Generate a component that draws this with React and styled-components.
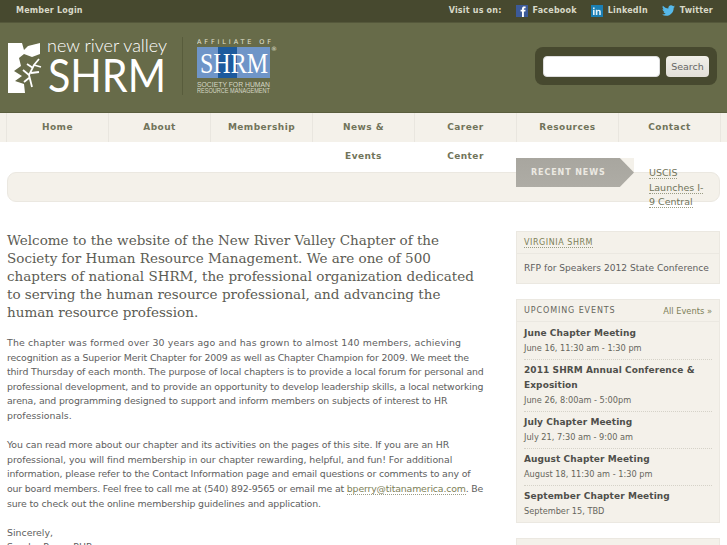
import React from 'react';
import styled, { createGlobalStyle } from 'styled-components';
import { FaTwitter } from 'react-icons/fa';

const GlobalStyle = createGlobalStyle`
  html, body {
    margin: 0;
    padding: 0;
    height: 545px;
    overflow: hidden;
    background: #fff;
    font-family: "DejaVu Sans", sans-serif;
  }
`;

const events = [
  { title: 'June Chapter Meeting', date: 'June 16, 11:30 am - 1:30 pm' },
  { title: '2011 SHRM Annual Conference & Exposition', date: 'June 26, 8:00am - 5:00pm' },
  { title: 'July Chapter Meeting', date: 'July 21, 7:30 am - 9:00 am' },
  { title: 'August Chapter Meeting', date: 'August 18, 11:30 am - 1:30 pm' },
  { title: 'September Chapter Meeting', date: 'September 15, TBD' }
];

const navItems = ['Home', 'About', 'Membership', 'News & Events', 'Career Center', 'Resources', 'Contact'];

const Logo = () => (
  <svg width="170" height="58" viewBox="0 0 170 58">
    <path
      fill="#fff"
      d="M0 6h14l2 7 4-4 12-3v11l-8 3-8-3-5 4 2 8-7 5 8 5-7 5 9 3 1 9H0z"
    />
    <path
      fill="none"
      stroke="#fff"
      strokeWidth="1.8"
      d="M24 50l-3-12 5-10 5-6M21 38l-6-5M21 41l-5 4M25 31l-6-4M26 28l7 2M23 36l8-1"
    />
    <text x="39" y="15" fontFamily="Lato, sans-serif" fontWeight="300" fontSize="17.5" fill="#fff" textLength="120" lengthAdjust="spacingAndGlyphs">new river valley</text>
    <text x="40" y="55" fontFamily="Lato, sans-serif" fontSize="47" fill="#fff" textLength="118" lengthAdjust="spacingAndGlyphs">SHRM</text>
  </svg>
);

const AffiliateLogo = () => (
  <svg width="82" height="58" viewBox="0 0 82 58">
    <text x="0" y="7" fontFamily="'DejaVu Sans', sans-serif" fontSize="6.5" fill="#e4e4d6" textLength="74">AFFILIATE OF</text>
    <rect x="0" y="10" width="73" height="31" fill="#6f95c8" />
    <rect x="21" y="10" width="19" height="31" fill="#1d5a9d" />
    <text x="3" y="36" fontFamily="'Liberation Serif', serif" fontSize="29" fill="#fff" textLength="68" lengthAdjust="spacingAndGlyphs">SHRM</text>
    <text x="74" y="14" fontFamily="'DejaVu Sans', sans-serif" fontSize="6" fill="#e4e4d6">®</text>
    <text x="0" y="50" fontFamily="'Liberation Sans', sans-serif" fontSize="7" fill="#d6d8c6" textLength="73" lengthAdjust="spacingAndGlyphs">SOCIETY FOR HUMAN</text>
    <text x="0" y="56" fontFamily="'Liberation Sans', sans-serif" fontSize="7" fill="#d6d8c6" textLength="73" lengthAdjust="spacingAndGlyphs">RESOURCE MANAGEMENT</text>
  </svg>
);

const FacebookIcon = () => (
  <svg width="12" height="12" viewBox="0 0 12 12">
    <rect width="12" height="12" fill="#3c5a99" />
    <path fill="#fff" d="M6 12V6.6H4.6V4.8H6V3.6C6 2 7 1.4 8.2 1.4H9.6v1.9H8.7c-.6 0-.8.3-.8.8v.7h1.7l-.3 1.8H7.9V12z" />
  </svg>
);

const LinkedinIcon = () => (
  <svg width="12" height="12" viewBox="0 0 12 12">
    <rect width="12" height="12" fill="#1b7fb3" />
    <path fill="#dff1fa" d="M2 4.8h1.6V10H2zM2 2.4h1.6V4H2zM4.8 4.8h1.5v.7c.4-.5.9-.8 1.6-.8 1.3 0 1.9.8 1.9 2.1V10H8.2V7.1c0-.7-.2-1.1-.8-1.1s-1 .4-1 1.1V10H4.8z" />
  </svg>
);

const App = () => {
  return (
    <Page>
      <GlobalStyle />
      <TopBar>
        <TopLink>Member Login</TopLink>
        <Social>
          <TopLink>Visit us on:</TopLink>
          <SocialLink><FacebookIcon />Facebook</SocialLink>
          <SocialLink><LinkedinIcon />LinkedIn</SocialLink>
          <SocialLink><FaTwitter size={13} color="#56b9ea" />Twitter</SocialLink>
        </Social>
      </TopBar>

      <Header>
        <Logos>
          <Logo />
          <Divider />
          <AffiliateLogo />
        </Logos>
        <SearchPanel>
          <SearchInput type="text" />
          <SearchButton type="button">Search</SearchButton>
        </SearchPanel>
      </Header>

      <Nav>
        {navItems.map((item) => (
          <NavItem key={item}>{item}</NavItem>
        ))}
      </Nav>

      <Ticker>
        <TickerLabel>
          <TickerArrow>Recent News</TickerArrow>
        </TickerLabel>
        <TickerLink><Dotted>USCIS</Dotted> <Dotted>Launches I-</Dotted> <Dotted>9 Central</Dotted></TickerLink>
      </Ticker>

      <Main>
        <Content>
          <Intro>
            Welcome to the website of the New River Valley Chapter of the Society for Human Resource
            Management. We are one of 500 chapters of national SHRM, the professional organization
            dedicated to serving the human resource professional, and advancing the human resource
            profession.
          </Intro>
          <Para>
            <Line $ls={0.15}>The chapter was formed over 30 years ago and has grown to almost 140 members, achieving</Line>
            <Line $ls={-0.15}>recognition as a Superior Merit Chapter for 2009 as well as Chapter Champion for 2009. We meet the</Line>
            <Line $ls={-0.13}>third Thursday of each month. The purpose of local chapters is to provide a local forum for personal and</Line>
            <Line $ls={-0.14}>professional development, and to provide an opportunity to develop leadership skills, a local networking</Line>
            <Line $ls={-0.13}>arena, and programming designed to support and inform members on subjects of interest to HR</Line>
            <Line>professionals.</Line>
          </Para>
          <Para>
            <Line $ls={-0.11}>You can read more about our chapter and its activities on the pages of this site. If you are an HR</Line>
            <Line $ls={-0.06}>professional, you will find membership in our chapter rewarding, helpful, and fun! For additional</Line>
            <Line $ls={-0.14}>information, please refer to the Contact Information page and email questions or comments to any of</Line>
            <Line $ls={-0.17}>our board members. Feel free to call me at (540) 892-9565 or email me at <MailLink>bperry@titanamerica.com</MailLink>. Be</Line>
            <Line $ls={-0.13}>sure to check out the online membership guidelines and application.</Line>
          </Para>
          <Para>
            <Line>Sincerely,</Line>
            <Line>Sandra Perry, PHR</Line>
          </Para>
        </Content>

        <Sidebar>
          <Card>
            <CardHead>
              <CardLink>Virginia SHRM</CardLink>
            </CardHead>
            <CardBody>
              <CardText>RFP for Speakers 2012 State Conference</CardText>
            </CardBody>
          </Card>

          <Card>
            <CardHead>
              <CardTitle>Upcoming Events</CardTitle>
              <AllEvents>All Events »</AllEvents>
            </CardHead>
            <EventList>
              {events.map((ev) => (
                <EventItem key={ev.title}>
                  <EventTitle>{ev.title}</EventTitle>
                  <EventDate>{ev.date}</EventDate>
                </EventItem>
              ))}
            </EventList>
          </Card>

          <Card>
            <CardHead>
              <CardTitle>Chapter Sponsors</CardTitle>
            </CardHead>
          </Card>
        </Sidebar>
      </Main>
    </Page>
  );
};

const Page = styled.div`
  width: 727px;
  height: 545px;
  overflow: hidden;
`;

const TopBar = styled.div`
  height: 21px;
  padding: 0 14px 1px 16px;
  background: #47492f;
  border-bottom: 1px solid #55583b;
  display: flex;
  align-items: center;
  justify-content: space-between;
`;

const TopLink = styled.span`
  font-size: 8px;
  font-weight: bold;
  letter-spacing: 0.2px;
  color: #d9d9c8;
`;

const Social = styled.div`
  display: flex;
  align-items: center;
`;

const SocialLink = styled(TopLink)`
  display: flex;
  align-items: center;
  gap: 5px;
  margin-left: 14px;
`;

const Header = styled.div`
  height: 89px;
  background: #676b49;
  border-bottom: 1px solid #5a5e3e;
  display: flex;
  justify-content: space-between;
  padding: 0 10px 0 8px;
`;

const Logos = styled.div`
  display: flex;
  align-items: flex-start;
  padding-top: 14px;
`;

const Divider = styled.div`
  width: 1px;
  height: 58px;
  margin: 0 14px 0 4px;
  background: #585c3c;
`;

const SearchPanel = styled.div`
  align-self: flex-start;
  margin-top: 24px;
  width: 182px;
  height: 38px;
  box-sizing: border-box;
  padding: 0 8px;
  background: #47492f;
  border-radius: 8px;
  display: flex;
  align-items: center;
  gap: 6px;
`;

const SearchInput = styled.input`
  width: 117px;
  height: 21px;
  box-sizing: border-box;
  border: 1px solid #ddd;
  border-radius: 4px;
  background: #fff;
  padding: 0 4px;
`;

const SearchButton = styled.button`
  width: 43px;
  height: 21px;
  box-sizing: border-box;
  padding: 0;
  border: none;
  border-radius: 4px;
  background: linear-gradient(#f2f0ea, #e2dfd8);
  font-family: "DejaVu Sans", sans-serif;
  font-size: 9.5px;
  color: #666;
`;

const Nav = styled.div`
  height: 29px;
  background: #f4f1ea;
  display: flex;
  padding-left: 6px;
`;

const NavItem = styled.div`
  width: 102px;
  flex: none;
  box-sizing: border-box;
  border-right: 1px solid #e9e6df;
  padding: 0 14px;
  text-align: center;
  font-size: 9px;
  font-weight: bold;
  line-height: 29px;
  letter-spacing: 0.45px;
  color: #71745a;
  &:first-child {
    width: 103px;
    border-left: 1px solid #e9e6df;
  }
`;

const Ticker = styled.div`
  width: 713px;
  height: 30px;
  box-sizing: border-box;
  margin: 30px 0 0 7px;
  border: 1px solid #ebe8e1;
  border-radius: 9px;
  background: #f4f1ea;
  display: flex;
  align-items: flex-start;
  padding-left: 508px;
`;

const TickerLabel = styled.div`
  flex: none;
  width: 118px;
  height: 29px;
  margin-top: -15px;
  background: #f4f1ea;
`;

const TickerArrow = styled.div`
  height: 100%;
  box-sizing: border-box;
  padding-left: 15px;
  background: linear-gradient(#a8a69f, #aeaca5);
  clip-path: polygon(0 0, 88% 0, 100% 50%, 88% 100%, 0 100%);
  font-size: 8px;
  font-weight: bold;
  line-height: 29px;
  letter-spacing: 0.9px;
  text-transform: uppercase;
  color: #ece9e2;
`;

const TickerLink = styled.div`
  width: 62px;
  margin: -7px 0 0 15px;
  font-size: 9.5px;
  line-height: 14.6px;
  color: #71745a;
`;

const Dotted = styled.span`
  border-bottom: 1px dotted #9a9c85;
`;

const Main = styled.div`
  display: flex;
  gap: 31px;
  padding: 29px 8px 0 7px;
`;

const Content = styled.div`
  width: 478px;
  flex: none;
`;

const Intro = styled.p`
  margin: 0 0 15px;
  font-family: "DejaVu Serif", serif;
  font-size: 13.5px;
  line-height: 18px;
  color: #5c5c54;
`;

const Para = styled.div`
  margin: 0 0 14.6px;
  font-size: 9.4px;
  line-height: 14.6px;
  color: #5e5e5e;
`;

const Line = styled.span`
  display: block;
  white-space: nowrap;
  letter-spacing: ${(p) => p.$ls || 0}px;
`;

const MailLink = styled.span`
  color: #7d8058;
  border-bottom: 1px dotted #9a9c85;
`;

const Sidebar = styled.div`
  width: 204px;
  flex: none;
  display: flex;
  flex-direction: column;
  gap: 15px;
`;

const Card = styled.div`
  background: #f4f1ea;
  border: 1px solid #ebe8e1;
`;

const CardHead = styled.div`
  height: 21px;
  border-bottom: 1px solid #ebe8e1;
  display: flex;
  align-items: center;
  justify-content: space-between;
  padding: 0 7px;
`;

const CardLink = styled.span`
  font-size: 8px;
  letter-spacing: 0.55px;
  text-transform: uppercase;
  color: #7d8058;
  border-bottom: 1px dotted #9a9c85;
`;

const CardTitle = styled.span`
  font-size: 8px;
  letter-spacing: 0.9px;
  text-transform: uppercase;
  color: #66665c;
`;

const AllEvents = styled.span`
  font-size: 8.3px;
  color: #7d8058;
`;

const CardBody = styled.div`
  padding: 7px;
`;

const CardText = styled.div`
  font-size: 9.1px;
  line-height: 15px;
  white-space: nowrap;
  color: #5e5e5e;
`;

const EventList = styled.div`
  padding: 1px 7px 0;
`;

const EventItem = styled.div`
  padding: 3px 0 4px;
  border-bottom: 1px dotted #d5d2c8;
  &:last-child {
    border-bottom: none;
  }
`;

const EventTitle = styled.div`
  font-size: 9px;
  font-weight: bold;
  letter-spacing: 0.08px;
  line-height: 15px;
  color: #4f4f4a;
`;

const EventDate = styled.div`
  font-size: 8.2px;
  line-height: 14px;
  color: #66665c;
`;

export default App;
